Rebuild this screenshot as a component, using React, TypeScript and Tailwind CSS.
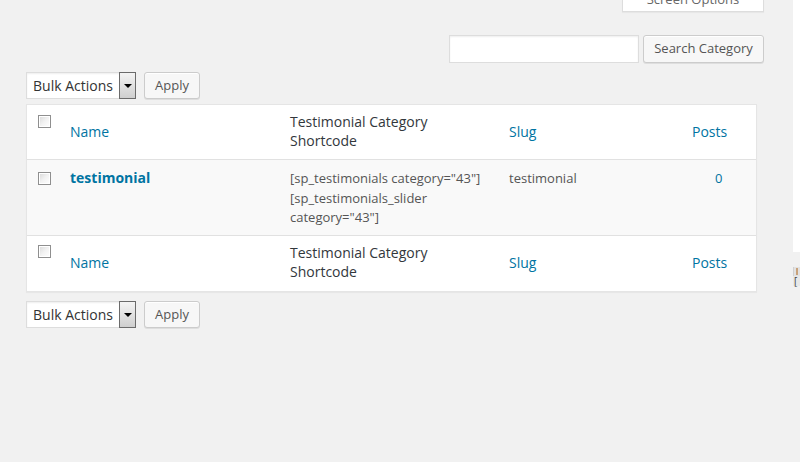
import React from "react";

const blue = "text-[#0074a2]";

function Check() {
  return (
    <div className="w-[13px] h-[13px] border border-[#8f8f8f] bg-gradient-to-br from-[#d8d8d8] via-[#f2f2f2] to-[#ffffff] shadow-[inset_0_0_0_1px_#ffffff]" />
  );
}

function BulkRow() {
  return (
    <div className="flex items-center gap-[8px] h-[27px]">
      <div className="flex h-[27px] w-[110px] bg-white border border-[#ddd] shadow-[inset_0_1px_2px_rgba(0,0,0,0.07)]">
        <div className="flex-1 pl-[6px] flex items-center text-[14px] text-[#333]">Bulk Actions</div>
        <div className="w-[15px] h-full border border-[#6b6b6b] bg-gradient-to-b from-[#f4f4f4] to-[#cfcfcf] flex items-center justify-center -my-[1px] -mr-[1px] box-content">
          <div className="w-0 h-0 border-l-[4px] border-r-[4px] border-t-[4px] border-l-transparent border-r-transparent border-t-black" />
        </div>
      </div>
      <div className="h-[27px] px-[10px] flex items-center bg-[#f7f7f7] border border-[#ccc] rounded-[3px] shadow-[inset_0_1px_0_#fff,0_1px_0_rgba(0,0,0,0.08)] text-[13px] text-[#555]">
        Apply
      </div>
    </div>
  );
}

function HeadRow({ top }: { top?: boolean }) {
  return (
    <div className={`flex bg-white ${top ? "h-[55px] border-b pb-[2px]" : "h-[56px] border-t pb-[3px]"} border-[#e1e1e1]`}>
      <div className={`w-[43px] pl-[11px] ${top ? "pt-[10px]" : "pt-[9px]"}`}>
        <Check />
      </div>
      <div className={`w-[220px] flex items-center text-[14px] ${blue}`}>Name</div>
      <div className="w-[219px] flex items-center text-[14px] leading-[19px] text-[#32373c]">
        Testimonial Category<br />Shortcode
      </div>
      <div className={`w-[183px] flex items-center text-[14px] ${blue}`}>Slug</div>
      <div className={`flex items-center text-[14px] ${blue}`}>Posts</div>
    </div>
  );
}

export default function App() {
  return (
    <div
      className="relative w-[800px] h-[462px] bg-[#f1f1f1] overflow-hidden"
      style={{ fontFamily: '"Open Sans", "Noto Sans", sans-serif' }}
    >
      {/* right-edge overlapping panel */}
      <div className="absolute left-[793px] top-0 w-[7px] h-[252px] bg-white" />
      <div className="absolute left-[793px] top-[267px] w-[7px] h-[9px] bg-[#e2e2e2] border-l border-[#d0d0d0]">
        <div className="ml-[2px] mt-[1px] w-[2px] h-[7px] bg-[#c9a27a]" />
      </div>
      <div className="absolute left-[793px] top-[276px] w-[7px] h-[10px] bg-[#e8e8e8] text-[10px] leading-[10px] text-[#444] pl-[1px]">[</div>

      <div className="pl-[26px] pr-[36px]">
        {/* Screen options */}
        <div className="flex justify-end">
          <div className="w-[142px] h-[12px] bg-white border border-t-0 border-[#ddd] shadow-[0_1px_1px_rgba(0,0,0,0.04)] overflow-hidden flex justify-center">
            <div className="text-[13px] leading-[13px] -mt-[7px] text-[#666]">Screen Options</div>
          </div>
        </div>
        {/* search */}
        <div className="flex justify-end gap-[4px] mt-[23px]">
          <div className="w-[190px] h-[28px] bg-white border border-[#ddd] shadow-[inset_0_1px_2px_rgba(0,0,0,0.07)]" />
          <div className="h-[28px] w-[121px] flex items-center justify-center bg-[#f7f7f7] border border-[#ccc] rounded-[3px] shadow-[inset_0_1px_0_#fff,0_1px_0_rgba(0,0,0,0.08)] text-[13px] text-[#555]">
            Search Category
          </div>
        </div>
        <div className="mt-[9px]">
          <BulkRow />
        </div>
        {/* table */}
        <div className="mt-[5px] w-[731px] border border-[#e5e5e5] shadow-[0_1px_1px_rgba(0,0,0,0.04)]">
          <HeadRow top />
          <div className="flex h-[75px] bg-[#f9f9f9]">
            <div className="w-[43px] pl-[11px] pt-[12px]">
              <Check />
            </div>
            <div className={`w-[220px] pt-[8px] text-[14px] leading-[19px] font-bold ${blue}`}>testimonial</div>
            <div className="w-[219px] pt-[9px] text-[13px] leading-[19.5px] text-[#555]">
              [sp_testimonials category="43"]<br />[sp_testimonials_slider<br />category="43"]
            </div>
            <div className="w-[183px] pt-[9px] text-[13px] leading-[19px] text-[#555]">testimonial</div>
            <div className={`pl-[23px] pt-[9px] text-[13px] leading-[19px] ${blue}`}>0</div>
          </div>
          <HeadRow />
        </div>
        <div className="mt-[9px]">
          <BulkRow />
        </div>
      </div>
    </div>
  );
}
